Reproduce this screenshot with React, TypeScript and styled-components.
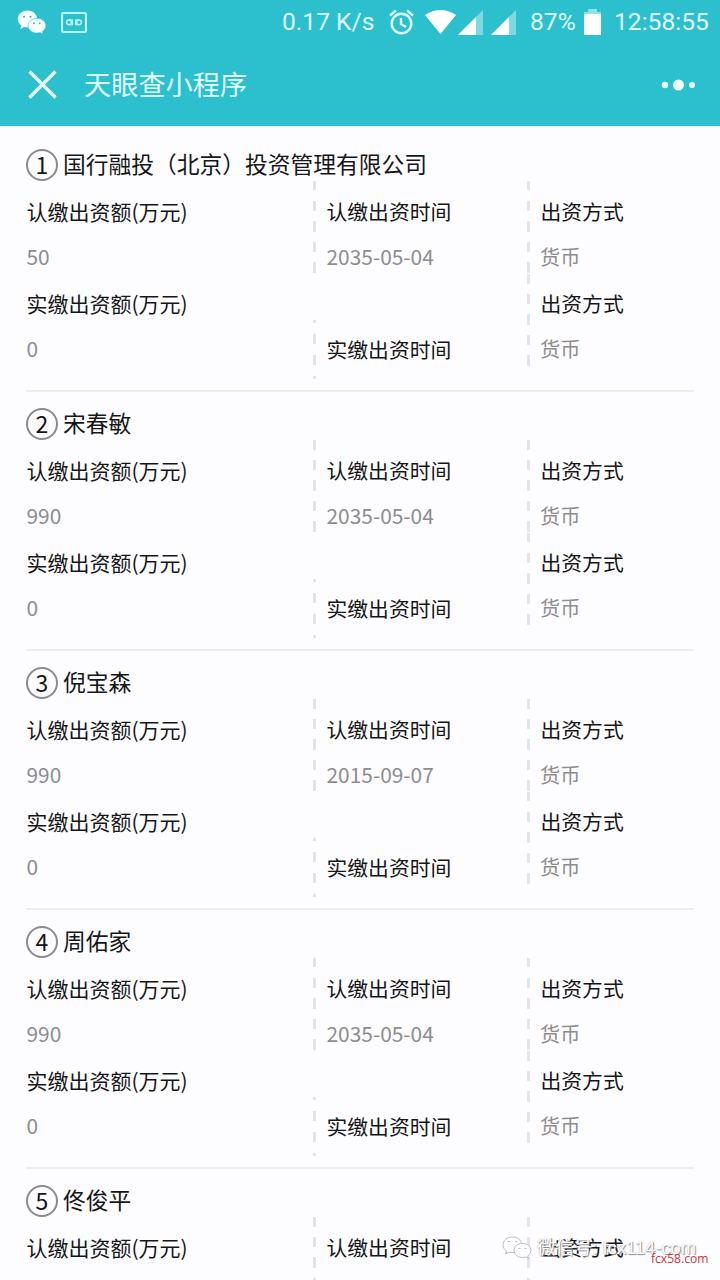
import React from "react";
import styled, { createGlobalStyle } from "styled-components";

const cjk = `"Noto Sans CJK SC", sans-serif`;

const GlobalStyle = createGlobalStyle`
  * { box-sizing: border-box; }
  body { margin: 0; background: #fdfcfe; font-family: ${cjk}; }
`;

const Screen = styled.div`
  position: relative;
  width: 720px;
  height: 1280px;
  overflow: hidden;
  background: #fdfcfe;
`;

const Header = styled.header`
  height: 126px;
  background: #2cbfcd;
  color: #e0fcff;
`;

const StatusBar = styled.div`
  display: flex;
  align-items: center;
  height: 44px;
  padding: 0 11px 0 17px;
  font: 24.6px/44px Roboto, sans-serif;
  white-space: nowrap;
`;

const StatusIcon = styled.svg<{ $gap: number }>`
  flex: none;
  margin-left: ${(p) => p.$gap}px;
`;

const StatusText = styled.span<{ $gap: number; $width: number }>`
  flex: none;
  width: ${(p) => p.$width}px;
  margin-left: ${(p) => p.$gap}px;
`;

const TitleBar = styled.div`
  display: flex;
  align-items: center;
  height: 81px;
  padding: 0 25px 0 28px;
`;

const Title = styled.h1`
  flex: 1;
  margin: 0 0 0 27px;
  padding-bottom: 2px;
  font-size: 27.2px;
  font-weight: 400;
  line-height: 79px;
`;

const List = styled.main`
  padding: 6.5px 26px 0;
`;

const Record = styled.section`
  height: 259.1px;
  border-bottom: 2px solid #ececef;
`;

const RecordHead = styled.div`
  display: flex;
  align-items: center;
  height: 48.5px;
  padding-top: 16px;
`;

const Badge = styled.span`
  display: flex;
  align-items: center;
  justify-content: center;
  width: 32px;
  height: 32px;
  border: 2px solid #8b8b8d;
  border-radius: 50%;
  color: #161618;
  font-size: 23px;
  line-height: 26px;
  padding-bottom: 2px;
`;

const Name = styled.span`
  margin-left: 5px;
  padding-bottom: 2px;
  color: #161618;
  font-size: 22.75px;
  line-height: 30px;
`;

const Columns = styled.div`
  display: grid;
  grid-template-columns: 287px 214px 1fr;
`;

const Cell = styled.div<{ $line?: "full" | "short"; $top?: number }>`
  height: ${(p) => (p.$line === "short" ? 59 : 92.5)}px;
  margin-top: ${(p) => p.$top ?? 0}px;
  padding-top: ${(p) => (p.$line === "short" ? 7 : 7.5)}px;
  padding-left: ${(p) => (p.$line ? 13.5 : 0.5)}px;
  background: ${(p) =>
    p.$line === "full"
      ? "repeating-linear-gradient(to bottom, #e4e4e8 0 9.5px, transparent 9.5px 19.6px, #e4e4e8 19.6px 20.6px)"
      : p.$line === "short"
        ? "repeating-linear-gradient(to bottom, #e4e4e8 0 3px, transparent 3px 14px, #e4e4e8 14px 21px)"
        : "none"}
    0 0 / 3px 100% no-repeat;
`;

const Label = styled.div<{ $wide?: boolean }>`
  color: #161618;
  font-size: ${(p) => (p.$wide ? 21 : 20.8)}px;
  line-height: 45.5px;
  white-space: nowrap;
`;

const Value = styled.div`
  margin-top: -0.5px;
  color: #8d8d90;
  font-size: 20.9px;
  line-height: 45.5px;
`;

const Method = styled(Value)`
  margin-left: -0.5px;
  font-size: 20.2px;
`;

const Watermark = styled.div`
  position: absolute;
  left: 502px;
  top: 1233px;
  display: flex;
  align-items: center;
  gap: 4px;
  color: #fdfcfe;
  font: 18.4px/30px "Liberation Sans", ${cjk};
  white-space: nowrap;
  text-shadow: 1px 1px 1px #8a8a8d, -0.5px -0.5px 0 #cfcfd2;
`;

const SiteMark = styled.div`
  position: absolute;
  left: 651px;
  top: 1250px;
  color: #c6383b;
  font: 12.1px/17px "Open Sans", sans-serif;
`;

const records = [
  { name: "国行融投（北京）投资管理有限公司", amount: "50", date: "2035-05-04" },
  { name: "宋春敏", amount: "990", date: "2035-05-04" },
  { name: "倪宝森", amount: "990", date: "2015-09-07" },
  { name: "周佑家", amount: "990", date: "2035-05-04" },
  { name: "佟俊平" },
];

const Signal = ({ gap }: { gap: number }) => (
  <StatusIcon $gap={gap} width="25" height="25" viewBox="0 0 25 25">
    <path d="M0 25 25 0V25Z" fill="#7fd9e2" />
    <path d="M0 25 18 7V25Z" fill="#fff" />
  </StatusIcon>
);

export default function App() {
  return (
    <Screen>
      <GlobalStyle />
      <Header>
        <StatusBar>
          <StatusIcon $gap={0} width="30" height="25" viewBox="0 0 30 25">
            <path d="M10.500 .5C4.800.5.8 4.400.8 9.300c0 2.700 1.400 4.800 3.500 6.300l-.9 3.500 3.700-2.100c4 1.200 12.600.2 13.100-7.600C20.200 4.400 16.200.5 10.500.5Z" fill="#f5ffff" />
            <path d="M20 8.300c-5 0-8.900 3.300-8.900 7.400s3.900 7.400 8.900 7.400c1.200 0 2.200-.2 3.200-.5l3 1.700-.8-2.700c2-1.300 3.500-3.400 3.500-5.900 0-4.100-3.900-7.400-8.900-7.400Z" fill="#f5ffff" stroke="#2cbfcd" strokeWidth=".6" />
            <g fill="#579ca5"><circle cx="7" cy="6.800" r="1" /><circle cx="13.500" cy="6.800" r="1" /><circle cx="17" cy="13.300" r=".9" /><circle cx="22.800" cy="13.300" r=".9" /></g>
          </StatusIcon>
          <StatusIcon $gap={14} width="26" height="21" viewBox="0 0 26 21" fill="none" stroke="#b9f4f8">
            <rect x="1" y="1" width="24" height="19" rx="1.500" strokeWidth="2.200" />
            <g strokeWidth="1.500"><circle cx="8" cy="10.300" r="2.400" /><circle cx="18" cy="10.300" r="2.400" /><path d="M8 7.800h3.500v5H8M18 7.800h-3.500v5H18" strokeWidth="1.100" /></g>
          </StatusIcon>
          <StatusText $gap={195} $width={93}>0.17 K/s</StatusText>
          <StatusIcon $gap={14} width="25" height="26" viewBox="0 0 25 26" fill="none" stroke="#e0fcff" strokeWidth="2.400">
            <circle cx="12.500" cy="14.500" r="9.800" />
            <path d="M1 6.500 7 1.500M24 6.500 18 1.500M12 9v6l5 3" />
          </StatusIcon>
          <StatusIcon $gap={11} width="31" height="24" viewBox="0 0 31 24">
            <path d="M0 5Q15.500-5 31 5L15.500 24Z" fill="#fff" />
          </StatusIcon>
          <Signal gap={2} />
          <Signal gap={8} />
          <StatusText $gap={14} $width={46}>87%</StatusText>
          <StatusIcon $gap={8} width="17" height="26" viewBox="0 0 17 26">
            <path d="M4 0h9v3h4v5H0V3h4Z" fill="#8fe0e8" />
            <path d="M0 5h17v21H0Z" fill="#fff" />
          </StatusIcon>
          <StatusText $gap={13} $width={95}>12:58:55</StatusText>
        </StatusBar>
        <TitleBar>
          <svg width="29" height="29" viewBox="0 0 29 29" stroke="#ecffff" strokeWidth="3.200">
            <path d="M1.500 1.500 27.500 27.500M27.500 1.500 1.500 27.500" />
          </svg>
          <Title>天眼查小程序</Title>
          <svg width="34" height="12" viewBox="0 0 34 12" fill="#f0ffff">
            <circle cx="4" cy="6" r="3.200" /><circle cx="17.500" cy="6" r="5.500" /><circle cx="31" cy="6" r="3" />
          </svg>
        </TitleBar>
      </Header>
      <List>
        {records.map((r, i) => (
          <Record key={r.name}>
            <RecordHead>
              <Badge>{i + 1}</Badge>
              <Name>{r.name}</Name>
            </RecordHead>
            <Columns>
              <div>
                <Cell><Label $wide>认缴出资额(万元)</Label>{r.amount && <Value>{r.amount}</Value>}</Cell>
                {r.amount && <Cell><Label $wide>实缴出资额(万元)</Label><Value>0</Value></Cell>}
              </div>
              <div>
                <Cell $line="full"><Label>认缴出资时间</Label>{r.date && <Value>{r.date}</Value>}</Cell>
                {r.date && <Cell $line="short" $top={46}><Label>实缴出资时间</Label></Cell>}
              </div>
              <div>
                <Cell $line="full"><Label>出资方式</Label>{r.date && <Method>货币</Method>}</Cell>
                {r.date && <Cell $line="full"><Label>出资方式</Label><Method>货币</Method></Cell>}
              </div>
            </Columns>
          </Record>
        ))}
      </List>
      <Watermark>
        <svg width="31" height="24" viewBox="0 0 31 24" fill="#fdfcfe" stroke="#b4b4b7" strokeWidth=".9">
          <path d="M10.500 1C5 1 1 4.500 1 9c0 2.500 1.300 4.600 3.500 6l-.8 3 3.500-1.800c7 1.500 12.500-2 12.500-7.200C19.700 4.500 16 1 10.500 1Z" />
          <path d="M20.500 7.500c-5 0-8.500 3.200-8.500 7s3.500 7 8.500 7c1.200 0 2.200-.2 3.200-.5l2.800 1.500-.7-2.500c2-1.300 3.200-3.300 3.200-5.500 0-3.800-3.500-7-8.500-7Z" />
          <path d="M6 5.500h2M13 5.500h2M16.500 12.500h2M22.500 12.500h2" />
        </svg>
        <span>微信号: fcx114-com</span>
      </Watermark>
      <SiteMark>fcx58.com</SiteMark>
    </Screen>
  );
}
